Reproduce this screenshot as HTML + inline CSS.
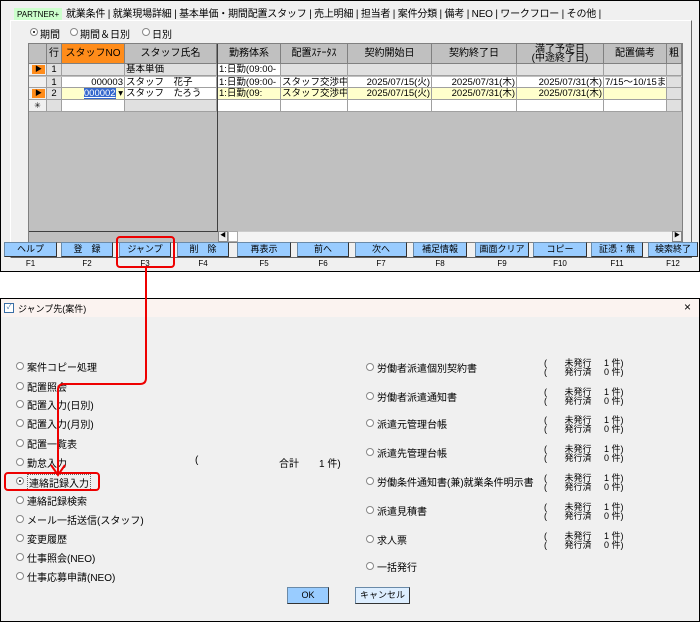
<!DOCTYPE html>
<html><head><meta charset="utf-8"><style>
*{margin:0;padding:0;box-sizing:border-box}
body{width:700px;height:622px;background:#fff;position:relative;overflow:hidden;font-family:"Liberation Sans","Noto Sans CJK JP",sans-serif;font-size:10px;color:#000}
.a{position:absolute;white-space:nowrap}
.r{position:absolute;width:8px;height:8px;border:1px solid #888;border-radius:50%;background:#fff}
.r.s::after{content:"";position:absolute;left:2px;top:2px;width:2px;height:2px;background:#000;border-radius:50%}
.hd{position:absolute;background:#c0c0c0;border-right:1px solid #808080;border-bottom:1px solid #808080;text-align:center;line-height:20px;top:44px;height:20px;white-space:nowrap}
.c{position:absolute;border-right:1px solid #a0a0a0;border-bottom:1px solid #a0a0a0;line-height:11px;overflow:hidden;padding:0 1px;white-space:nowrap;font-size:9.5px}
.btn{position:absolute;top:242px;height:15px;background:#99ccff;border:1px solid #6a8aa8;border-right-color:#333;border-bottom-color:#333;text-align:center;line-height:13px;font-size:9px;white-space:nowrap}
.fk{position:absolute;top:259px;font-size:8px;text-align:center}
.it{position:absolute;font-size:10px;white-space:nowrap}
.cnt{position:absolute;font-size:9px;line-height:9px;white-space:pre}
</style></head><body>
<div class="a" style="left:0;top:0;width:700px;height:272px;background:#f0f0f0;border:1px solid #000"></div>
<div class="a" style="left:14px;top:8px;height:13px;padding:0 3px;background:#ccffcc;line-height:13px;font-size:8px">PARTNER+</div>
<div class="a" style="left:66px;top:8px;line-height:13px;font-size:10px;letter-spacing:-0.2px">就業条件 | 就業現場詳細 | 基本単価・期間配置スタッフ | 売上明細 | 担当者 | 案件分類 | 備考 | NEO | ワークフロー | その他 |</div>
<div class="a" style="left:10px;top:20px;width:682px;height:238px;border:1px solid #fff;border-right-color:#666;border-bottom-color:#666"></div>
<div class="r s" style="left:30px;top:28px"></div><div class="a" style="left:40px;top:26px;font-size:10px">期間</div>
<div class="r" style="left:70px;top:28px"></div><div class="a" style="left:80px;top:26px;font-size:10px">期間＆日別</div>
<div class="r" style="left:142px;top:28px"></div><div class="a" style="left:152px;top:26px;font-size:10px">日別</div>
<div class="a" style="left:28px;top:43px;width:655px;height:200px;background:#c0c0c0;border:1px solid #808080"></div>
<div class="a" style="left:217px;top:44px;width:1px;height:188px;background:#404040"></div>
<div class="hd" style="left:29px;width:18px"></div>
<div class="hd" style="left:47px;width:15px">行</div>
<div class="hd" style="left:62px;width:63px;background:#ff8c1a">スタッフNO</div>
<div class="hd" style="left:125px;width:92px">スタッフ氏名</div>
<div class="hd" style="left:218px;width:63px">勤務体系</div>
<div class="hd" style="left:281px;width:67px">配置ｽﾃｰﾀｽ</div>
<div class="hd" style="left:348px;width:84px">契約開始日</div>
<div class="hd" style="left:432px;width:85px">契約終了日</div>
<div class="hd" style="left:517px;width:87px;line-height:9px;padding-top:1px">満了予定日<br>(中途終了日)</div>
<div class="hd" style="left:604px;width:63px">配置備考</div>
<div class="hd" style="left:667px;width:15px">粗</div>
<div class="c" style="left:29px;top:64px;width:18px;height:12px;background:#f0f0f0"><span style="display:block;margin:1px 0 0 2px;width:13px;height:9px;background:#ff8c1a;color:#000;font-size:7px;line-height:9px;text-align:center">▶</span></div>
<div class="c" style="left:47px;top:64px;width:15px;height:12px;background:#e0e0e0;text-align:center">1</div>
<div class="c" style="left:62px;top:64px;width:63px;height:12px;background:#e0e0e0"></div>
<div class="c" style="left:125px;top:64px;width:92px;height:12px;background:#e0e0e0">基本単価</div>
<div class="c" style="left:218px;top:64px;width:63px;height:12px;background:#fff">1:日勤(09:00-</div>
<div class="c" style="left:281px;top:64px;width:67px;height:12px;background:#e0e0e0"></div>
<div class="c" style="left:348px;top:64px;width:84px;height:12px;background:#e0e0e0"></div>
<div class="c" style="left:432px;top:64px;width:85px;height:12px;background:#e0e0e0"></div>
<div class="c" style="left:517px;top:64px;width:87px;height:12px;background:#e0e0e0"></div>
<div class="c" style="left:604px;top:64px;width:63px;height:12px;background:#e0e0e0"></div>
<div class="c" style="left:667px;top:64px;width:15px;height:12px;background:#e0e0e0"></div>

<div class="c" style="left:29px;top:77px;width:18px;height:11px;background:#f0f0f0"></div>
<div class="c" style="left:47px;top:77px;width:15px;height:11px;background:#e0e0e0;text-align:center">1</div>
<div class="c" style="left:62px;top:77px;width:63px;height:11px;background:#fff;text-align:right">000003</div>
<div class="c" style="left:125px;top:77px;width:92px;height:11px;background:#fff">スタッフ　花子</div>
<div class="c" style="left:218px;top:77px;width:63px;height:11px;background:#fff">1:日勤(09:00-</div>
<div class="c" style="left:281px;top:77px;width:67px;height:11px;background:#fff">スタッフ交渉中</div>
<div class="c" style="left:348px;top:77px;width:84px;height:11px;background:#fff;text-align:right">2025/07/15(火)</div>
<div class="c" style="left:432px;top:77px;width:85px;height:11px;background:#fff;text-align:right">2025/07/31(木)</div>
<div class="c" style="left:517px;top:77px;width:87px;height:11px;background:#fff;text-align:right">2025/07/31(木)</div>
<div class="c" style="left:604px;top:77px;width:63px;height:11px;background:#fff">7/15～10/15ま</div>
<div class="c" style="left:667px;top:77px;width:15px;height:11px;background:#e0e0e0"></div>

<div class="c" style="left:29px;top:88px;width:18px;height:12px;background:#f0f0f0"><span style="display:block;margin:1px 0 0 2px;width:13px;height:9px;background:#ff8c1a;font-size:7px;line-height:9px;text-align:center">▶</span></div>
<div class="c" style="left:47px;top:88px;width:15px;height:12px;background:#e0e0e0;text-align:center">2</div>
<div class="c" style="left:62px;top:88px;width:63px;height:12px;background:#ffffcc;text-align:right"><span style="background:#3366cc;color:#fff;text-decoration:underline">000002</span> ▾</div>
<div class="c" style="left:125px;top:88px;width:92px;height:12px;background:#fff">スタッフ　たろう</div>
<div class="c" style="left:218px;top:88px;width:63px;height:12px;background:#ffffcc">1:日勤(09:</div>
<div class="c" style="left:281px;top:88px;width:67px;height:12px;background:#ffffcc">スタッフ交渉中</div>
<div class="c" style="left:348px;top:88px;width:84px;height:12px;background:#ffffcc;text-align:right">2025/07/15(火)</div>
<div class="c" style="left:432px;top:88px;width:85px;height:12px;background:#ffffcc;text-align:right">2025/07/31(木)</div>
<div class="c" style="left:517px;top:88px;width:87px;height:12px;background:#ffffcc;text-align:right">2025/07/31(木)</div>
<div class="c" style="left:604px;top:88px;width:63px;height:12px;background:#ffffcc"></div>
<div class="c" style="left:667px;top:88px;width:15px;height:12px;background:#e0e0e0"></div>

<div class="c" style="left:29px;top:100px;width:18px;height:12px;background:#f0f0f0;text-align:center;font-size:8px">✳</div>
<div class="c" style="left:47px;top:100px;width:15px;height:12px;background:#e0e0e0"></div>
<div class="c" style="left:62px;top:100px;width:63px;height:12px;background:#fff"></div>
<div class="c" style="left:125px;top:100px;width:92px;height:12px;background:#e0e0e0"></div>
<div class="c" style="left:218px;top:100px;width:63px;height:12px;background:#fff"></div>
<div class="c" style="left:281px;top:100px;width:67px;height:12px;background:#fff"></div>
<div class="c" style="left:348px;top:100px;width:84px;height:12px;background:#fff"></div>
<div class="c" style="left:432px;top:100px;width:85px;height:12px;background:#fff"></div>
<div class="c" style="left:517px;top:100px;width:87px;height:12px;background:#fff"></div>
<div class="c" style="left:604px;top:100px;width:63px;height:12px;background:#fff"></div>
<div class="c" style="left:667px;top:100px;width:15px;height:12px;background:#e0e0e0"></div>
<div class="a" style="left:29px;top:231px;width:188px;height:1px;background:#404040"></div>
<div class="a" style="left:218px;top:231px;width:464px;height:11px;background:#f4f4f4;border-top:1px solid #ccc"></div>
<div class="a" style="left:218px;top:231px;width:10px;height:11px;background:#eee;border:1px solid #888;font-size:6px;line-height:9px;text-align:center">◀</div>
<div class="a" style="left:228px;top:231px;width:10px;height:11px;background:#fff;border:1px solid #aaa"></div>
<div class="a" style="left:672px;top:231px;width:10px;height:11px;background:#eee;border:1px solid #888;font-size:6px;line-height:9px;text-align:center">▶</div>
<div class="btn" style="left:4px;width:53px">ヘルプ</div><div class="fk" style="left:4px;width:53px">F1</div>
<div class="btn" style="left:61px;width:52px">登　録</div><div class="fk" style="left:61px;width:52px">F2</div>
<div class="btn" style="left:119px;width:52px">ジャンプ</div><div class="fk" style="left:119px;width:52px">F3</div>
<div class="btn" style="left:177px;width:52px">削　除</div><div class="fk" style="left:177px;width:52px">F4</div>
<div class="btn" style="left:237px;width:54px">再表示</div><div class="fk" style="left:237px;width:54px">F5</div>
<div class="btn" style="left:297px;width:52px">前へ</div><div class="fk" style="left:297px;width:52px">F6</div>
<div class="btn" style="left:355px;width:52px">次へ</div><div class="fk" style="left:355px;width:52px">F7</div>
<div class="btn" style="left:413px;width:54px">補足情報</div><div class="fk" style="left:413px;width:54px">F8</div>
<div class="btn" style="left:475px;width:54px">画面クリア</div><div class="fk" style="left:475px;width:54px">F9</div>
<div class="btn" style="left:533px;width:54px">コピー</div><div class="fk" style="left:533px;width:54px">F10</div>
<div class="btn" style="left:591px;width:52px">証憑：無</div><div class="fk" style="left:591px;width:52px">F11</div>
<div class="btn" style="left:648px;width:50px">検索終了</div><div class="fk" style="left:648px;width:50px">F12</div>

<div class="a" style="left:0;top:298px;width:700px;height:324px;background:#f0f0f0;border:1px solid #000"></div>
<div class="a" style="left:1px;top:299px;width:698px;height:18px;background:#fbf3f0"></div>
<div class="a" style="left:4px;top:303px;width:10px;height:10px;border:1px solid #3a6ea5;background:#fff;font-size:7px;line-height:8px;color:#3a6ea5;text-align:center">✓</div>
<div class="a" style="left:18px;top:302px;font-size:9px">ジャンプ先(案件)</div>
<div class="a" style="left:684px;top:300px;font-size:12px">×</div>

<div class="r" style="left:16px;top:362px"></div><div class="it" style="left:27px;top:359px">案件コピー処理</div>
<div class="r" style="left:16px;top:382px"></div><div class="it" style="left:27px;top:379px">配置照会</div>
<div class="r" style="left:16px;top:400px"></div><div class="it" style="left:27px;top:397px">配置入力(日別)</div>
<div class="r" style="left:16px;top:419px"></div><div class="it" style="left:27px;top:416px">配置入力(月別)</div>
<div class="r" style="left:16px;top:439px"></div><div class="it" style="left:27px;top:436px">配置一覧表</div>
<div class="r" style="left:16px;top:458px"></div><div class="it" style="left:27px;top:455px">勤怠入力</div>
<div class="it" style="left:195px;top:455px">(</div><div class="it" style="left:279px;top:455px">合計　　1 件)</div>
<div class="r s" style="left:16px;top:477px"></div><div class="it" style="left:27px;top:474px;border:1px dotted #666;padding:0 1px">連絡記録入力</div>
<div class="r" style="left:16px;top:496px"></div><div class="it" style="left:27px;top:493px">連絡記録検索</div>
<div class="r" style="left:16px;top:515px"></div><div class="it" style="left:27px;top:512px">メール一括送信(スタッフ)</div>
<div class="r" style="left:16px;top:534px"></div><div class="it" style="left:27px;top:531px">変更履歴</div>
<div class="r" style="left:16px;top:553px"></div><div class="it" style="left:27px;top:550px">仕事照会(NEO)</div>
<div class="r" style="left:16px;top:572px"></div><div class="it" style="left:27px;top:569px">仕事応募申請(NEO)</div>

<div class="r" style="left:366px;top:363px"></div><div class="it" style="left:377px;top:360px">労働者派遣個別契約書</div>
<div class="r" style="left:366px;top:392px"></div><div class="it" style="left:377px;top:389px">労働者派遣通知書</div>
<div class="r" style="left:366px;top:419px"></div><div class="it" style="left:377px;top:416px">派遣元管理台帳</div>
<div class="r" style="left:366px;top:448px"></div><div class="it" style="left:377px;top:445px">派遣先管理台帳</div>
<div class="r" style="left:366px;top:477px"></div><div class="it" style="left:377px;top:474px">労働条件通知書(兼)就業条件明示書</div>
<div class="r" style="left:366px;top:506px"></div><div class="it" style="left:377px;top:503px">派遣見積書</div>
<div class="r" style="left:366px;top:535px"></div><div class="it" style="left:377px;top:532px">求人票</div>
<div class="r" style="left:366px;top:562px"></div><div class="it" style="left:377px;top:559px">一括発行</div>

<div class="cnt" style="left:544px;top:359px">(       未発行     1 件)
(       発行済     0 件)</div>
<div class="cnt" style="left:544px;top:388px">(       未発行     1 件)
(       発行済     0 件)</div>
<div class="cnt" style="left:544px;top:416px">(       未発行     1 件)
(       発行済     0 件)</div>
<div class="cnt" style="left:544px;top:445px">(       未発行     1 件)
(       発行済     0 件)</div>
<div class="cnt" style="left:544px;top:474px">(       未発行     1 件)
(       発行済     0 件)</div>
<div class="cnt" style="left:544px;top:503px">(       未発行     1 件)
(       発行済     0 件)</div>
<div class="cnt" style="left:544px;top:532px">(       未発行     1 件)
(       発行済     0 件)</div>

<div class="btn" style="left:287px;top:587px;width:42px;height:17px;line-height:15px">OK</div>
<div class="btn" style="left:355px;top:587px;width:55px;height:17px;line-height:15px;background:#ddeeff">キャンセル</div>

<div class="a" style="left:116px;top:236px;width:59px;height:32px;border:2px solid #e00;border-radius:4px"></div>
<div class="a" style="left:4px;top:472px;width:96px;height:19px;border:2px solid #e00;border-radius:4px"></div>
<svg class="a" style="left:0;top:0" width="700" height="622"><path d="M146 268 V378 Q146 384 140 384 H64 Q58 384 58 390 V474" fill="none" stroke="#e00" stroke-width="2"/><path d="M51 465 L58 475 L65 465" fill="none" stroke="#e00" stroke-width="2"/></svg>
</body></html>
